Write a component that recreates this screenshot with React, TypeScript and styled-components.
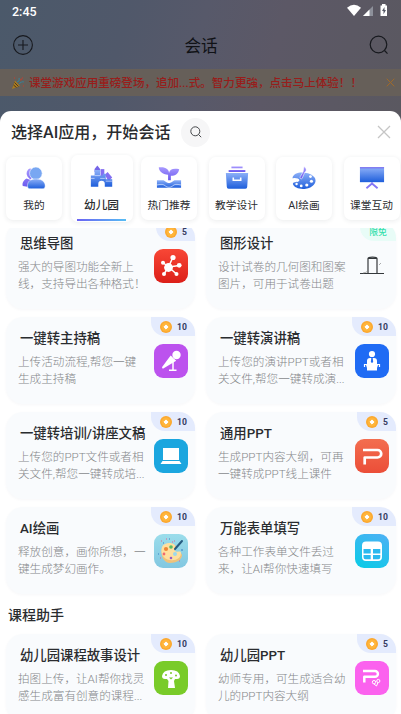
import React from "react";
import styled, { createGlobalStyle, css } from "styled-components";

const GlobalStyle = createGlobalStyle`
  * { box-sizing: border-box; }
  html, body { margin: 0; padding: 0; overflow: hidden; }
  body { font-family: Roboto, "Noto Sans CJK SC", sans-serif; color: #2a2c2f; }
  h1, h2, h3, p { margin: 0; font-weight: 500; }
  svg { display: block; flex: none; }
`;

const Screen = styled.div`
  width: 401px;
  height: 714px;
  overflow: hidden;
  display: flex;
  flex-direction: column;
  background: linear-gradient(105deg, #4b596a 0, #50586a 30%, #57596a 48%, #5c5866 66%, #5a5860 100%) 0 0 / 100% 130px no-repeat;
`;

const StatusBar = styled.div`
  height: 23px;
  padding: 0 13px 0 12px;
  display: flex;
  align-items: center;
  justify-content: space-between;
  color: #fff;
  font-size: 12.5px;
  font-weight: 500;
`;

const StatusIcons = styled.div`
  display: flex;
  align-items: center;
  svg { margin-top: -2px; }
`;

const Header = styled.header`
  height: 46px;
  padding: 0 11px 3px 12px;
  display: flex;
  align-items: center;
  justify-content: space-between;
`;

const HeaderTitle = styled.h1`
  font-size: 16.6px;
  line-height: 24px;
  padding-top: 4px;
  color: #101216;
  font-weight: 400;
`;

const Notice = styled.div`
  height: 27px;
  margin-bottom: 15px;
  padding: 0 6px 0 11px;
  display: flex;
  align-items: center;
  background: #665f59;
  color: #981d1b;
`;

const NoticeText = styled.p`
  flex: 1;
  margin-left: 4px;
  font-size: 11.55px;
  line-height: 20px;
  padding-top: 1px;
  white-space: nowrap;
`;

const Sheet = styled.main`
  flex: 1;
  min-height: 0;
  display: flex;
  flex-direction: column;
  background: #fff;
  border-radius: 11px 11px 0 0;
`;

const SheetHeader = styled.div`
  height: 42px;
  flex: none;
  padding: 0 10px 0 11px;
  display: flex;
  align-items: center;
`;

const SheetTitle = styled.h2`
  font-size: 16.05px;
  line-height: 24px;
  padding-top: 2px;
  white-space: nowrap;
  width: 170px;
`;

const SearchButton = styled.div`
  width: 29px;
  height: 29px;
  margin-right: auto;
  border-radius: 50%;
  display: grid;
  place-items: center;
  background: #f6f6f7;
`;

const Tabs = styled.nav`
  height: 75px;
  flex: none;
  padding-left: 6px;
  display: flex;
  gap: 11.5px;
  overflow: hidden;
`;

const TabItem = styled.div<{ $active?: boolean }>`
  flex: none;
  width: 56px;
  height: 63px;
  margin-top: 4px;
  padding-top: 9px;
  display: flex;
  flex-direction: column;
  align-items: center;
  border-radius: 7px;
  background: #fff;
  box-shadow: 0 1px 5px rgba(30, 40, 60, 0.09);
  font-size: 10.7px;
  line-height: 16px;
  white-space: nowrap;
  ${(p) =>
    p.$active &&
    css`
      width: 62px;
      height: 67px;
      margin: 2px -3px 0;
      padding-top: 10px;
      font-size: 11.7px;
      font-weight: 500;
    `}
`;

const TabLabel = styled.span`
  margin-top: 8px;
`;

const TabLine = styled.i`
  flex: none;
  width: 49px;
  height: 2px;
  margin-top: 6px;
  background: linear-gradient(90deg, #6b63f3, #57bdf4);
`;

const List = styled.div`
  flex: 1;
  min-height: 0;
  overflow: hidden;
`;

const CardGrid = styled.section<{ $scrolled?: boolean }>`
  display: grid;
  grid-template-columns: 189px 190px;
  column-gap: 11px;
  row-gap: 8px;
  padding-left: 6px;
  margin-top: ${(p) => (p.$scrolled ? "-6px" : "0")};
`;

const SectionTitle = styled.h2`
  height: 40px;
  padding: 10px 0 0 8px;
  font-size: 14px;
  line-height: 22px;
`;

const Card = styled.article`
  height: 87px;
  padding-left: 12px;
  display: flex;
  justify-content: space-between;
  border-radius: 17px;
  background: #f9fbfd;
  box-shadow: 0 1px 3px rgba(40, 60, 90, 0.04);
`;

const CardText = styled.div`
  width: 128px;
  padding-top: 12px;
  white-space: nowrap;
`;

const CardTitle = styled.h3`
  padding-left: 2px;
  font-size: 13.35px;
  line-height: 20px;
`;

const CardDesc = styled.p`
  margin-top: 5px;
  font-size: 11.6px;
  line-height: 17.2px;
  color: #85878a;
  font-weight: 300;
`;

const CardSide = styled.div`
  display: flex;
  flex-direction: column;
  align-items: flex-end;
`;

const Badge = styled.div<{ $free?: boolean; $narrow?: boolean }>`
  width: ${(p) => (p.$free ? 36 : p.$narrow ? 39 : 44)}px;
  height: 19px;
  padding-left: ${(p) => (p.$free ? 0 : 9)}px;
  display: flex;
  align-items: center;
  justify-content: ${(p) => (p.$free ? "center" : "flex-start")};
  gap: 5px;
  border-radius: 0 16px 0 14px;
  background: ${(p) => (p.$free ? "#e8fcf7" : "#e4ebfd")};
  color: ${(p) => (p.$free ? "#35dfac" : "#343b62")};
  font-size: ${(p) => (p.$free ? 8.8 : 8.6)}px;
  font-weight: ${(p) => (p.$free ? 500 : 700)};
  white-space: nowrap;
`;

const IconTile = styled.div<{ $bg: string }>`
  width: 34px;
  height: 34px;
  margin: 8px 7px 0 0;
  border-radius: 9px;
  overflow: hidden;
  background: ${(p) => p.$bg};
`;

const Grad = ({ id, a, b }: { id: string; a: string; b: string }) => (
  <linearGradient id={id} x1="0" y1="0" x2="0" y2="1">
    <stop offset="0" stopColor={a} />
    <stop offset="1" stopColor={b} />
  </linearGradient>
);

const TabSvg = ({ id, children }: { id: string; children: React.ReactNode }) => (
  <svg width="26" height="24" viewBox="0 0 28 25">
    <defs>
      <Grad id={`${id}-b`} a="#8db0f8" b="#1e5edb" />
      <Grad id={`${id}-p`} a="#a99aff" b="#6b59ee" />
    </defs>
    {children}
  </svg>
);

const tabIcons: Record<string, React.ReactNode> = {
  mine: (
    <TabSvg id="mine">
      <path d="M10 2a6 6 0 0 0-3 9l3 3 5-5zM6 13c-4 2-5 6-4 8l5 1 4-7z" fill="url(#mine-p)" />
      <circle cx="16" cy="7.500" r="6.800" fill="#78a7f2" stroke="#fff" strokeWidth=".6" />
      <path d="M7 21c0-5 3-7.500 9.500-7.500S26 17 26 21c0 3-2 3-4 3H11c-2 0-4 0-4-3z" fill="url(#mine-b)" stroke="#fff" strokeWidth=".5" />
    </TabSvg>
  ),
  castle: (
    <TabSvg id="castle">
      <path d="M9 0l3 4v3H6V4z" fill="#7565e8" />
      <path d="M12.500 4h4v8h-4z" fill="#846ff2" />
      <path d="M20 7l5 6-4 4-4-7z" fill="#846ff2" />
      <path d="M2 11h4V5h6v6h3V9h3v6h7v8h-8v-3a3.500 3.500 0 0 0-7 0v3H2z" fill="url(#castle-b)" />
      <path d="M2 14h4M6 11h6M18 17h7M12 14h5" stroke="#e3ebff" strokeWidth=".7" />
    </TabSvg>
  ),
  sprout: (
    <TabSvg id="sprout">
      <path d="M3 1c7-1 11 2 11 6 1-4 4-5 11-4-1 5-4 7-9 7v5h-3V9C7 9 3 5 3 1z" fill="url(#sprout-p)" />
      <path d="M1 15h6c3 0 4 3 7 3s4-3 7-3h6v8H1z" fill="url(#sprout-b)" />
      <path d="M1 20c5-1 7-1 9 1 2 2 6 2 8 0 2-2 4-2 9-1" stroke="#d7e4ff" strokeWidth=".8" fill="none" />
    </TabSvg>
  ),
  drawer: (
    <TabSvg id="drawer">
      <path d="M8 0h12v2H8zM5 4h18v2H5z" fill="url(#drawer-p)" />
      <path d="M2 7h24l-1 15q0 2-2 2H5q-2 0-2-2z" fill="url(#drawer-b)" />
      <path d="M10 12v3h8v-3" fill="none" stroke="#fff" strokeWidth="1.700" />
    </TabSvg>
  ),
  palette: (
    <TabSvg id="palette">
      <path d="M5 8c6-3 18-1 21 5 2 5-3 10-10 11-6 1-13-1-14-5 0-3 7-1 7-4 0-2-5-3-7-2-1-1 1-4 3-5z" fill="url(#palette-b)" />
      <path d="M14 0c3 2 3 5 1 6l-3 7c-1 1-3 0-2-2l3-5z" fill="url(#palette-p)" stroke="#fff" strokeWidth=".6" />
      <g fill="#fff"><circle cx="21" cy="11" r="1.500" /><circle cx="22" cy="16" r="1.700" /><circle cx="17" cy="20" r="1.700" /><circle cx="11" cy="21" r="1.500" /><circle cx="6" cy="19" r="1.300" /></g>
    </TabSvg>
  ),
  board: (
    <TabSvg id="board">
      <path d="M1 1h26v16H1z" fill="url(#board-b)" />
      <path d="M1 1.500h26" stroke="#776cf0" strokeWidth="1.300" />
      <path d="M8 23.500l6-5 6 5M14 17v3" fill="none" stroke="#8576f5" strokeWidth="2" />
    </TabSvg>
  ),
};

const Coin = () => (
  <svg width="12" height="12" viewBox="0 0 12 12">
    <circle cx="6" cy="6" r="6" fill="#fba82f" />
    <circle cx="6" cy="6" r="4.500" fill="#ffb53b" />
    <path d="M6 3.900L8.100 6 6 8.100 3.900 6z" fill="#fff" stroke="#fff" strokeWidth="1" strokeLinejoin="round" />
  </svg>
);

const Tile = ({ children }: { children: React.ReactNode }) => (
  <svg width="34" height="34" viewBox="0 0 34 34" fill="none">{children}</svg>
);

const appIcons: Record<string, React.ReactNode> = {
  mind: (
    <Tile>
      <path d="M14.500 18L19 8M14.500 18l11-1.500M14.500 18l8 7M14.500 18L10 25M14.500 18l-5-4" stroke="#fff" strokeWidth="1.500" />
      <g fill="#fff"><circle cx="14.500" cy="18.500" r="4.400" /><circle cx="19" cy="8.500" r="2.600" /><circle cx="25.200" cy="16.300" r="2.400" /><circle cx="22.500" cy="25" r="2" /><circle cx="10" cy="25" r="2" /><circle cx="9" cy="13.800" r="2" /></g>
    </Tile>
  ),
  shape: (
    <Tile>
      <path d="M5 24.500h24M13 24V9.500q0-1.500 4.500-1.500t4.500 1.500V24M13.500 9.300h8" stroke="#34383b" strokeWidth="1.200" />
      <path d="M8 24q3-.3 5-2M24 16l2-2" stroke="#888" strokeWidth=".7" />
    </Tile>
  ),
  mic: (
    <Tile>
      <circle cx="22.500" cy="11" r="4.200" fill="#fff" />
      <path d="M16.700 11.500l5.500 5.200L9.300 24.500q-2 .4-1-1.700z" fill="#fff" />
      <path d="M19 18v8M15 26.200h7.500" stroke="#fff" strokeWidth="1.500" />
    </Tile>
  ),
  speaker: (
    <Tile>
      <g fill="#fff"><circle cx="17" cy="10" r="3.100" /><path d="M12 20v-3q0-3 3-3h4q3 0 3 3v3zM11 21h12l-1 3H12zM12 24h10v2.400H12z" /></g>
      <path d="M16.300 14h1.400l.5 4-1.200 1-1.200-1z" fill="#1f6bf4" />
      <path d="M9.500 20v3M24.500 20v3M9 20.500h16" stroke="#fff" strokeWidth="1.200" />
    </Tile>
  ),
  laptop: (
    <Tile>
      <path d="M9 9h16v12H9zM8.500 22h17l2 3h-21z" fill="#fff" />
    </Tile>
  ),
  ppt: (
    <Tile>
      <path d="M8 11h14.500a3.700 3.700 0 0 1 0 7.500H9.700v7" stroke="#fff" strokeWidth="2.700" strokeLinejoin="round" />
    </Tile>
  ),
  paint: (
    <Tile>
      <path d="M8 14c3-6 14-4 14-1 0 2-2 3-1 5 2 2 6-1 7 3 0 5-6 8-12 8S6 22 8 14z" fill="#efc27c" />
      <path d="M8 13c3-6 13-4 13-1s-2 4 0 5c2 2 6-1 6 2 0 5-5 8-11 7-7-1-10-7-8-13z" fill="#ffdf9f" />
      <circle cx="12" cy="15" r="2.100" fill="#ef8737" /><circle cx="17" cy="13" r="1.800" fill="#57bd65" />
      <circle cx="10" cy="20" r="1.400" fill="#f06b71" /><circle cx="17" cy="24" r="1.300" fill="#985dc8" />
      <circle cx="21" cy="20" r="2" fill="#9dd9eb" />
      <path d="M28 7l-7 8" stroke="#265b80" strokeWidth="2" strokeLinecap="round" />
      <path d="M7 7h1M12 5h1M20 7h1M6 24h1M25 27h1M18 8h1" stroke="#df668f" strokeWidth="1" />
      <path d="M9 9h1M15 5h1M4 20h1M27 16h2" stroke="#367ec3" strokeWidth="1" />
    </Tile>
  ),
  table: (
    <Tile>
      <path d="M11 7.500h12a4 4 0 0 1 4 4V23a4 4 0 0 1-4 4H11a4 4 0 0 1-4-4V11.500a4 4 0 0 1 4-4z" fill="#fff" />
      <path d="M8.500 15h7.200v4.400H8.500zM18 15h7.300v4.400H18zM8.500 21h7.200v4.300h-5.200a2 2 0 0 1-2-2zM18 21h7.300v2.300a2 2 0 0 1-2 2H18z" fill="#2bb9ef" />
    </Tile>
  ),
  tree: (
    <Tile>
      <path d="M8 15q1-6 9-6t9 6q0 3-3 3h-2l-1 2 1 7h-7l.5-7-1.500-2h-2q-3 0-3-3z" fill="#fff" />
      <g fill="#79cb29"><circle cx="12" cy="14" r="1" /><circle cx="17" cy="12" r="1" /><circle cx="22" cy="14.500" r="1" /><path d="M15 16.500l2 2 2-2z" /></g>
    </Tile>
  ),
  kidsPpt: (
    <Tile>
      <path d="M8 10h12a2.900 2.900 0 0 1 0 5.800H9.300V21.500" stroke="#fff" strokeWidth="2.500" strokeLinejoin="round" />
      <circle cx="19" cy="21.200" r="1.700" stroke="#fff" /><circle cx="23.300" cy="20" r="1.600" stroke="#fff" />
      <path d="M19 23l2.500 2 1.500-3.500" stroke="#fff" />
    </Tile>
  ),
};

interface AppCardData {
  title: string;
  lines: [string, string];
  cost: string;
  icon: string;
  bg: string;
}

const tools: AppCardData[] = [
  { title: "思维导图", lines: ["强大的导图功能全新上", "线，支持导出各种格式！"], cost: "5", icon: "mind", bg: "linear-gradient(#f84736, #dc1f19)" },
  { title: "图形设计", lines: ["设计试卷的几何图和图案", "图片，可用于试卷出题"], cost: "限免", icon: "shape", bg: "transparent" },
  { title: "一键转主持稿", lines: ["上传活动流程,帮您一键", "生成主持稿"], cost: "10", icon: "mic", bg: "#bc52ee" },
  { title: "一键转演讲稿", lines: ["上传您的演讲PPT或者相", "关文件,帮您一键转成演..."], cost: "10", icon: "speaker", bg: "#1f6bf4" },
  { title: "一键转培训/讲座文稿", lines: ["上传您的PPT文件或者相", "关文件,帮您一键转成培..."], cost: "10", icon: "laptop", bg: "#1ba6df" },
  { title: "通用PPT", lines: ["生成PPT内容大纲，可再", "一键转成PPT线上课件"], cost: "5", icon: "ppt", bg: "linear-gradient(#f36e50, #eb4e38)" },
  { title: "AI绘画", lines: ["释放创意，画你所想，一", "键生成梦幻画作。"], cost: "10", icon: "paint", bg: "linear-gradient(#9bddeb, #82c7e1)" },
  { title: "万能表单填写", lines: ["各种工作表单文件丢过", "来，让AI帮你快速填写"], cost: "10", icon: "table", bg: "linear-gradient(25deg, #08cce6, #4fb0f5)" },
];

const courses: AppCardData[] = [
  { title: "幼儿园课程故事设计", lines: ["拍图上传，让AI帮你找灵", "感生成富有创意的课程..."], cost: "10", icon: "tree", bg: "#79cb29" },
  { title: "幼儿园PPT", lines: ["幼师专用，可生成适合幼", "儿的PPT内容大纲"], cost: "5", icon: "kidsPpt", bg: "#fb62ee" },
];

const tabs = [
  { label: "我的", icon: "mine" },
  { label: "幼儿园", icon: "castle", active: true },
  { label: "热门推荐", icon: "sprout" },
  { label: "教学设计", icon: "drawer" },
  { label: "AI绘画", icon: "palette" },
  { label: "课堂互动", icon: "board" },
];

const AppCard = ({ title, lines, cost, icon, bg }: AppCardData) => {
  const free = cost === "限免";
  return (
    <Card>
      <CardText>
        <CardTitle>{title}</CardTitle>
        <CardDesc>{lines[0]}<br />{lines[1]}</CardDesc>
      </CardText>
      <CardSide>
        <Badge $free={free} $narrow={cost === "5"}>
          {!free && <Coin />}
          {cost}
        </Badge>
        <IconTile $bg={bg}>{appIcons[icon]}</IconTile>
      </CardSide>
    </Card>
  );
};

export default function App() {
  return (
    <Screen>
      <GlobalStyle />
      <StatusBar>
        2:45
        <StatusIcons>
          <svg width="41" height="13" viewBox="0 0 41 13">
            <path d="M0 3.800Q7-2.300 14 3.800L7 12z" fill="#fff" />
            <path d="M26 2v10H16z" fill="#8d909a" />
            <path d="M22.500 5.500V12H16z" fill="#fff" />
            <path d="M35 1.500V0h3.500v1.500H40V12h-6.500V1.500z" fill="#fff" />
            <path d="M37.500 3L35 7h1.500v3.200L39 6h-1.500z" fill="#555865" />
          </svg>
        </StatusIcons>
      </StatusBar>
      <Header>
        <svg width="22" height="22" viewBox="0 0 22 22" fill="none" stroke="#17191e" strokeWidth="1.100">
          <circle cx="11" cy="11" r="9.400" />
          <path d="M11 6v10M6 11h10" />
        </svg>
        <HeaderTitle>会话</HeaderTitle>
        <svg width="22" height="22" viewBox="0 0 22 22" fill="none" stroke="#17191e" strokeWidth="1.200">
          <circle cx="10.500" cy="10.500" r="8.300" />
          <path d="M16.500 16.500l3 3.200" />
        </svg>
      </Header>
      <Notice>
        <svg width="14" height="14" viewBox="0 0 14 14" fill="none">
          <path d="M4 4.500L1 13l8-3z" fill="#a87a20" />
          <path d="M2.500 9l3 2.500M3.500 6.500l4 4" stroke="#4f3a1b" />
          <path d="M6 6q3-1 2-4M8 8q2-3 5-2" stroke="#3a7f94" strokeWidth="1.200" />
          <path d="M3 2h1M11 2h1M12 10h1M9 4l2-1" stroke="#a8483c" strokeWidth="1.400" />
        </svg>
        <NoticeText>课堂游戏应用重磅登场，追加...式。智力更強，点击马上体验！！</NoticeText>
        <svg width="9" height="9" viewBox="0 0 9 9" stroke="#a06a2a" strokeWidth="1">
          <path d="M.7.7l7.600 7.600M8.300.7L.7 8.300" />
        </svg>
      </Notice>
      <Sheet>
        <SheetHeader>
          <SheetTitle>选择AI应用，开始会话</SheetTitle>
          <SearchButton>
            <svg width="12" height="12" viewBox="0 0 12 12" fill="none" stroke="#333539" strokeWidth=".9">
              <circle cx="5.300" cy="5.300" r="4.500" />
              <path d="M8.600 8.600l2.600 2.600" />
            </svg>
          </SearchButton>
          <svg width="14" height="14" viewBox="0 0 14 14" stroke="#c5c5c5" strokeWidth="1.300">
            <path d="M1 1l12 12M13 1L1 13" />
          </svg>
        </SheetHeader>
        <Tabs>
          {tabs.map((t) => (
            <TabItem key={t.label} $active={t.active}>
              {tabIcons[t.icon]}
              <TabLabel>{t.label}</TabLabel>
              {t.active && <TabLine />}
            </TabItem>
          ))}
        </Tabs>
        <List>
          <CardGrid $scrolled>
            {tools.map((c) => <AppCard key={c.title} {...c} />)}
          </CardGrid>
          <SectionTitle>课程助手</SectionTitle>
          <CardGrid>
            {courses.map((c) => <AppCard key={c.title} {...c} />)}
          </CardGrid>
        </List>
      </Sheet>
    </Screen>
  );
}
